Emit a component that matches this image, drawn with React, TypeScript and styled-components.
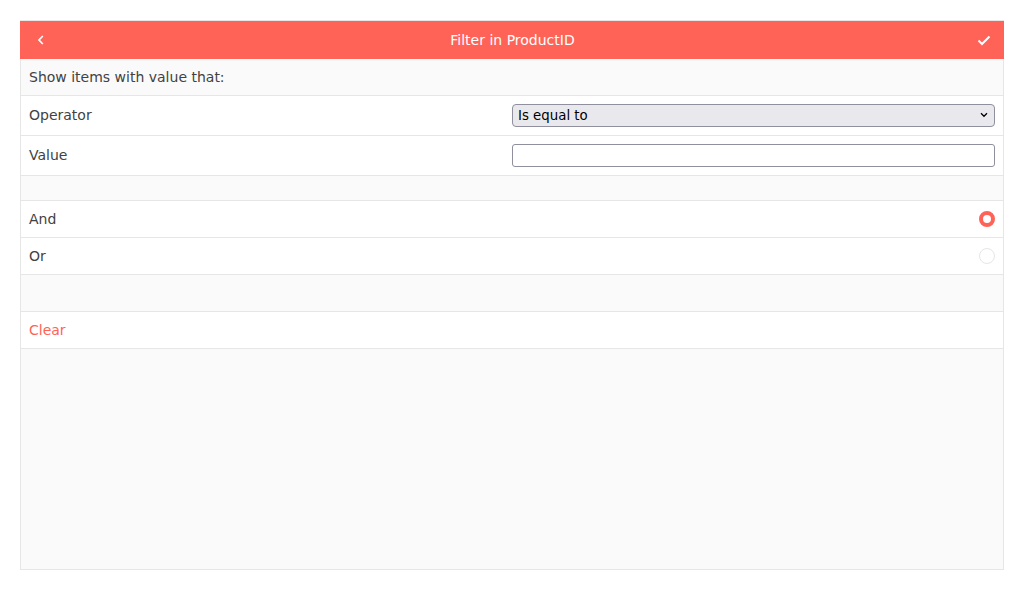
import React, { useState } from "react";
import styled, { createGlobalStyle } from "styled-components";

const Global = createGlobalStyle`
  html, body { margin: 0; padding: 0; background: #ffffff; }
  body { font-family: "DejaVu Sans", "Noto Sans", sans-serif; }
  * { box-sizing: border-box; }
`;

const Page = styled.div`
  padding: 20px;
  width: 1024px;
  height: 590px;
`;

const Panel = styled.div`
  width: 984px;
  height: 550px;
  border: 1px solid #e6e6e6;
  background: #fafafa;
  display: flex;
  flex-direction: column;
`;

const Header = styled.div`
  height: 38px;
  margin: 0 -1px;
  background: #ff6358;
  color: #ffffff;
  display: flex;
  align-items: center;
  justify-content: space-between;
  padding: 0 12px 0 13px;
  font-size: 14px;
`;

const IconBtn = styled.span`
  width: 16px;
  height: 16px;
  display: flex;
  align-items: center;
  justify-content: center;
`;

const Title = styled.span`
  flex: 1;
  text-align: center;
`;

const Row = styled.div<{ $h: number; $muted?: boolean; $lift?: number }>`
  height: ${(p) => p.$h}px;
  background: ${(p) => (p.$muted ? "#fafafa" : "#ffffff")};
  border-bottom: 1px solid #e6e6e6;
  display: flex;
  align-items: center;
  justify-content: space-between;
  padding: 0 8px ${(p) => p.$lift ?? 0}px;
  font-size: 14px;
  color: #424242;
`;

const Label = styled.span<{ $accent?: boolean }>`
  color: ${(p) => (p.$accent ? "#ff6358" : "#424242")};
`;

const Select = styled.select`
  width: 483px;
  height: 23px;
  font-family: "DejaVu Sans", sans-serif;
  font-size: 13.33px;
  color: #000;
  background: #e9e9ed;
  border: 1px solid #8f8f9d;
  border-radius: 4px;
  padding: 0 5px;
  appearance: none;
  background-image: url("data:image/svg+xml,%3Csvg xmlns='http://www.w3.org/2000/svg' width='10' height='6' viewBox='0 0 10 6'%3E%3Cpath d='M2 1.3 L5 4.3 L8 1.3' fill='none' stroke='%23000' stroke-width='1.3'/%3E%3C/svg%3E");
  background-repeat: no-repeat;
  background-position: right 5px center;
  outline: none;
`;

const Input = styled.input`
  width: 483px;
  height: 23px;
  background: #ffffff;
  border: 1px solid #8f8f9d;
  border-radius: 3px;
  outline: none;
`;

const Radio = styled.span<{ $on?: boolean }>`
  width: 16px;
  height: 16px;
  border-radius: 50%;
  border: ${(p) => (p.$on ? "4px solid #ff6358" : "1px solid #e6e6e6")};
  background: #ffffff;
  cursor: pointer;
`;

const Fill = styled.div`
  flex: 1;
  background: #fafafa;
`;

export default function App() {
  const [logic, setLogic] = useState<"and" | "or">("and");
  return (
    <>
      <Global />
      <Page>
        <Panel>
          <Header>
            <IconBtn>
              <svg width="10" height="12" viewBox="0 0 10 12">
                <path d="M6.8 2 L3 6 L6.8 10" fill="none" stroke="#fff" strokeWidth="1.7" />
              </svg>
            </IconBtn>
            <Title>Filter in ProductID</Title>
            <IconBtn>
              <svg width="16" height="16" viewBox="0 0 16 16">
                <path d="M2.5 8.5 L6 12 L13.5 4.5" fill="none" stroke="#fff" strokeWidth="2" />
              </svg>
            </IconBtn>
          </Header>
          <Row $h={37} $muted>
            <Label>Show items with value that:</Label>
          </Row>
          <Row $h={40} $lift={1}>
            <Label>Operator</Label>
            <Select defaultValue="eq">
              <option value="eq">Is equal to</option>
              <option value="neq">Is not equal to</option>
            </Select>
          </Row>
          <Row $h={40} $lift={1}>
            <Label>Value</Label>
            <Input type="text" />
          </Row>
          <Row $h={25} $muted />
          <Row $h={37} onClick={() => setLogic("and")}>
            <Label>And</Label>
            <Radio $on={logic === "and"} />
          </Row>
          <Row $h={37} onClick={() => setLogic("or")}>
            <Label>Or</Label>
            <Radio $on={logic === "or"} />
          </Row>
          <Row $h={37} $muted />
          <Row $h={37}>
            <Label $accent>Clear</Label>
          </Row>
          <Fill />
        </Panel>
      </Page>
    </>
  );
}
